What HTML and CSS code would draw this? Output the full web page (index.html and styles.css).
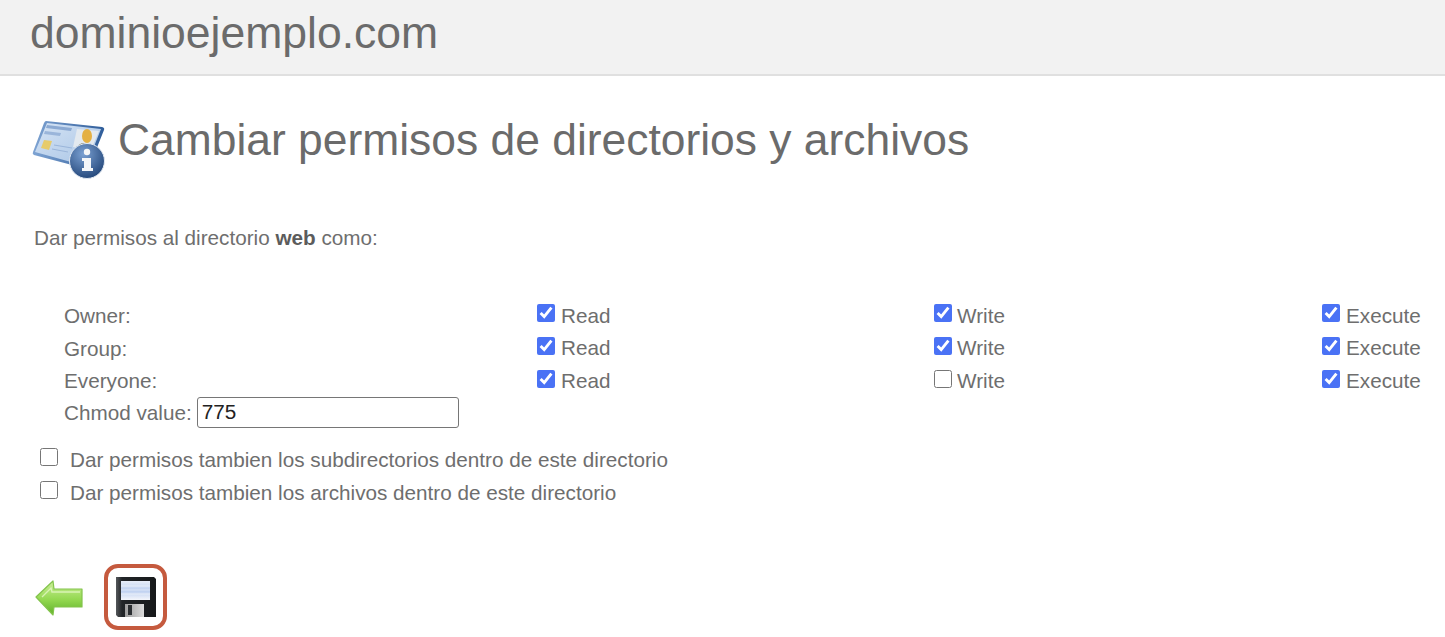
FILE: index.html
```html
<!DOCTYPE html>
<html lang="es">
<head>
<meta charset="utf-8">
<title>Cambiar permisos</title>
<link rel="stylesheet" href="styles.css">
</head>
<body>
<header class="topbar"><span class="domain">dominioejemplo.com</span></header>
<main class="content">
  <div class="title-row">
    <svg class="title-icon" width="76" height="66" viewBox="0 0 76 66">
      <defs>
        <linearGradient id="card" x1="0" y1="0" x2="1" y2="1"><stop offset="0" stop-color="#d5e3f4"/><stop offset="1" stop-color="#a9c5e6"/></linearGradient>
        <linearGradient id="edge" x1="0" y1="0" x2="1" y2="0"><stop offset="0" stop-color="#7fa4d3"/><stop offset="1" stop-color="#2f5d9a"/></linearGradient>
        <radialGradient id="ball" cx=".4" cy=".3" r=".8"><stop offset="0" stop-color="#7aa0d2"/><stop offset="1" stop-color="#1c3f72"/></radialGradient>
      </defs>
      <path d="M16 4 L72 10 Q75 11 74 13 L66 33 L42 48 L4 38 Q2 37 3 35 L14 6 Q15 4 16 4Z" fill="url(#edge)"/>
      <path d="M17 6 L71 12 L63 32 L41 45 L5 35Z" fill="url(#card)"/>
      <path d="M17 8 L42 11 L41 14 L16 11Z" fill="#8ba9d2"/>
      <path d="M15 14 L31 16 L30 19 L14 17Z" fill="#9ab5da"/>
      <path d="M47 12 L69 14 L61 33 L43 30Z" fill="#e3e9ef"/>
      <ellipse cx="57" cy="19" rx="5" ry="7" fill="#e4b043"/>
      <path d="M46 33 Q48 26 54 26 L61 28 L58 36Z" fill="#77735a"/>
      <path d="M14 23 L22 24 L19 33 L11 31Z" fill="#e6cb6b"/>
      <path d="M24 28 L42 31 M22 32 L38 35" stroke="#9ab5da" stroke-width="1"/>
      <circle cx="57" cy="44" r="17.5" fill="url(#ball)" stroke="#e2e9f2" stroke-width="1"/>
      <circle cx="57" cy="35" r="3.2" fill="#f4f6f8"/>
      <path d="M52 41 L61 41 L61 51 L63 51 L63 54 L52 54 L52 51 L54 51 L54 44 L52 44Z" fill="#f4f6f8"/>
    </svg>
    <h1 class="title">Cambiar permisos de directorios y archivos</h1>
  </div>
  <p class="intro">Dar permisos al directorio <b>web</b> como:</p>
  <div class="perm-grid">
    <span>Owner:</span>
    <label class="perm"><input type="checkbox" checked><span>Read</span></label>
    <label class="perm tight"><input type="checkbox" checked><span>Write</span></label>
    <label class="perm"><input type="checkbox" checked><span>Execute</span></label>
    <span>Group:</span>
    <label class="perm"><input type="checkbox" checked><span>Read</span></label>
    <label class="perm tight"><input type="checkbox" checked><span>Write</span></label>
    <label class="perm"><input type="checkbox" checked><span>Execute</span></label>
    <span>Everyone:</span>
    <label class="perm"><input type="checkbox" checked><span>Read</span></label>
    <label class="perm tight"><input type="checkbox"><span>Write</span></label>
    <label class="perm"><input type="checkbox" checked><span>Execute</span></label>
  </div>
  <div class="chmod"><label for="chmod">Chmod value:</label><input id="chmod" class="chmod-input" type="text" value="775"></div>
  <div class="options">
    <label class="option"><input type="checkbox"><span>Dar permisos tambien los subdirectorios dentro de este directorio</span></label>
    <label class="option"><input type="checkbox"><span>Dar permisos tambien los archivos dentro de este directorio</span></label>
  </div>
  <div class="actions">
    <a class="back" href="#" aria-label="Volver">
      <svg width="50" height="40" viewBox="0 0 50 40">
        <defs><linearGradient id="arrow" x1="0" y1="0" x2="0" y2="1"><stop offset="0" stop-color="#cdf09a"/><stop offset=".55" stop-color="#93d850"/><stop offset="1" stop-color="#5fb02a"/></linearGradient></defs>
        <path d="M2 18 L19 2 L20 10 L48 10 L48 28 L20 28 L19 36Z" fill="url(#arrow)" stroke="#83c44c" stroke-width="1.2" stroke-linejoin="round"/>
        <path d="M8 18 L17 9 L18 13 L46 13" fill="none" stroke="#e4f8c4" stroke-width="1.4" opacity=".8"/>
      </svg>
    </a>
    <button class="save" type="button" aria-label="Guardar">
      <svg width="42" height="42" viewBox="0 0 42 42">
        <defs>
          <linearGradient id="label" x1="0" y1="0" x2="0" y2="1"><stop offset="0" stop-color="#e8eef8"/><stop offset=".5" stop-color="#bccff0"/><stop offset="1" stop-color="#f4f6fb"/></linearGradient>
          <linearGradient id="body" x1="0" y1="0" x2="1" y2="0"><stop offset="0" stop-color="#55585b"/><stop offset=".15" stop-color="#222528"/><stop offset="1" stop-color="#16181a"/></linearGradient>
          <linearGradient id="shutter" x1="0" y1="0" x2="1" y2="0"><stop offset="0" stop-color="#9d9d9d"/><stop offset="1" stop-color="#dcdcdc"/></linearGradient>
        </defs>
        <path d="M1 1 H39 L41 3 V41 H3 L1 39Z" fill="url(#body)"/>
        <rect x="6" y="5" width="29" height="19" fill="url(#label)"/>
        <path d="M6 10 H35 M6 14 H35 M6 18 H35" stroke="#fff" stroke-width=".8" opacity=".7"/>
        <rect x="10" y="28" width="19" height="13" fill="url(#shutter)"/>
        <rect x="13" y="29" width="4" height="10" fill="#2b2e31"/>
      </svg>
    </button>
  </div>
</main>
</body>
</html>
```
FILE: styles.css
```css
* { box-sizing: border-box; }
html, body { margin: 0; padding: 0; }
body {
  background: #fff;
  color: #6e6e6e;
  font-family: "Liberation Sans", Arial, sans-serif;
  font-size: 20.7px;
  line-height: 33px;
  height: 637px;
  overflow: hidden;
}
.topbar {
  height: 76px;
  background: #f2f2f2;
  border-bottom: 2px solid #e0e0e0;
  padding: 8px 0 0 30px;
}
.domain { font-size: 44.5px; line-height: 50px; color: #6b6b6b; display: block; }
.content { padding: 38px 0 0 30px; }
.title-row { display: flex; align-items: flex-start; height: 66px; }
.title-icon { flex: none; margin: 3px 0 0 0; }
.title { margin: 1px 0 0 12px; font-size: 44.4px; line-height: 50px; font-weight: 400; color: #6b6b6b; }
.intro { margin: 44px 0 0 4px; line-height: 28px; }
.intro b { color: #5c5c5c; }
.perm-grid {
  display: grid;
  grid-template-columns: 473px 397px 388px 1fr;
  grid-auto-rows: 32.67px;
  margin: 47px 0 0 34px;
}
.perm { display: flex; align-items: center; }
.perm input, .option input { width: 18px; height: 18px; margin: 0 6px 4px 0; accent-color: #4a72f5; flex: none; }
.perm.tight input { margin-right: 5px; }
.chmod { display: flex; align-items: center; margin-left: 34px; height: 31px; }
.chmod-input {
  width: 262px; height: 31px; margin-left: 5px; padding: 0 4px;
  border: 1.5px solid #767676; border-radius: 3px;
  font: 20.7px "Liberation Sans", Arial, sans-serif; color: #222;
}
.options { margin: 15px 0 0 10px; }
.option { display: flex; align-items: center; }
.option input { margin-right: 12px; }
.actions { display: flex; align-items: center; margin: 55px 0 0 4px; }
.back { display: block; height: 40px; margin-top: 4px; }
.save {
  width: 63px; height: 66px; margin-left: 20px; padding: 0;
  display: flex; align-items: center; justify-content: center;
  background: #fff; border: 4px solid #c55a3e; border-radius: 14px;
}
```
